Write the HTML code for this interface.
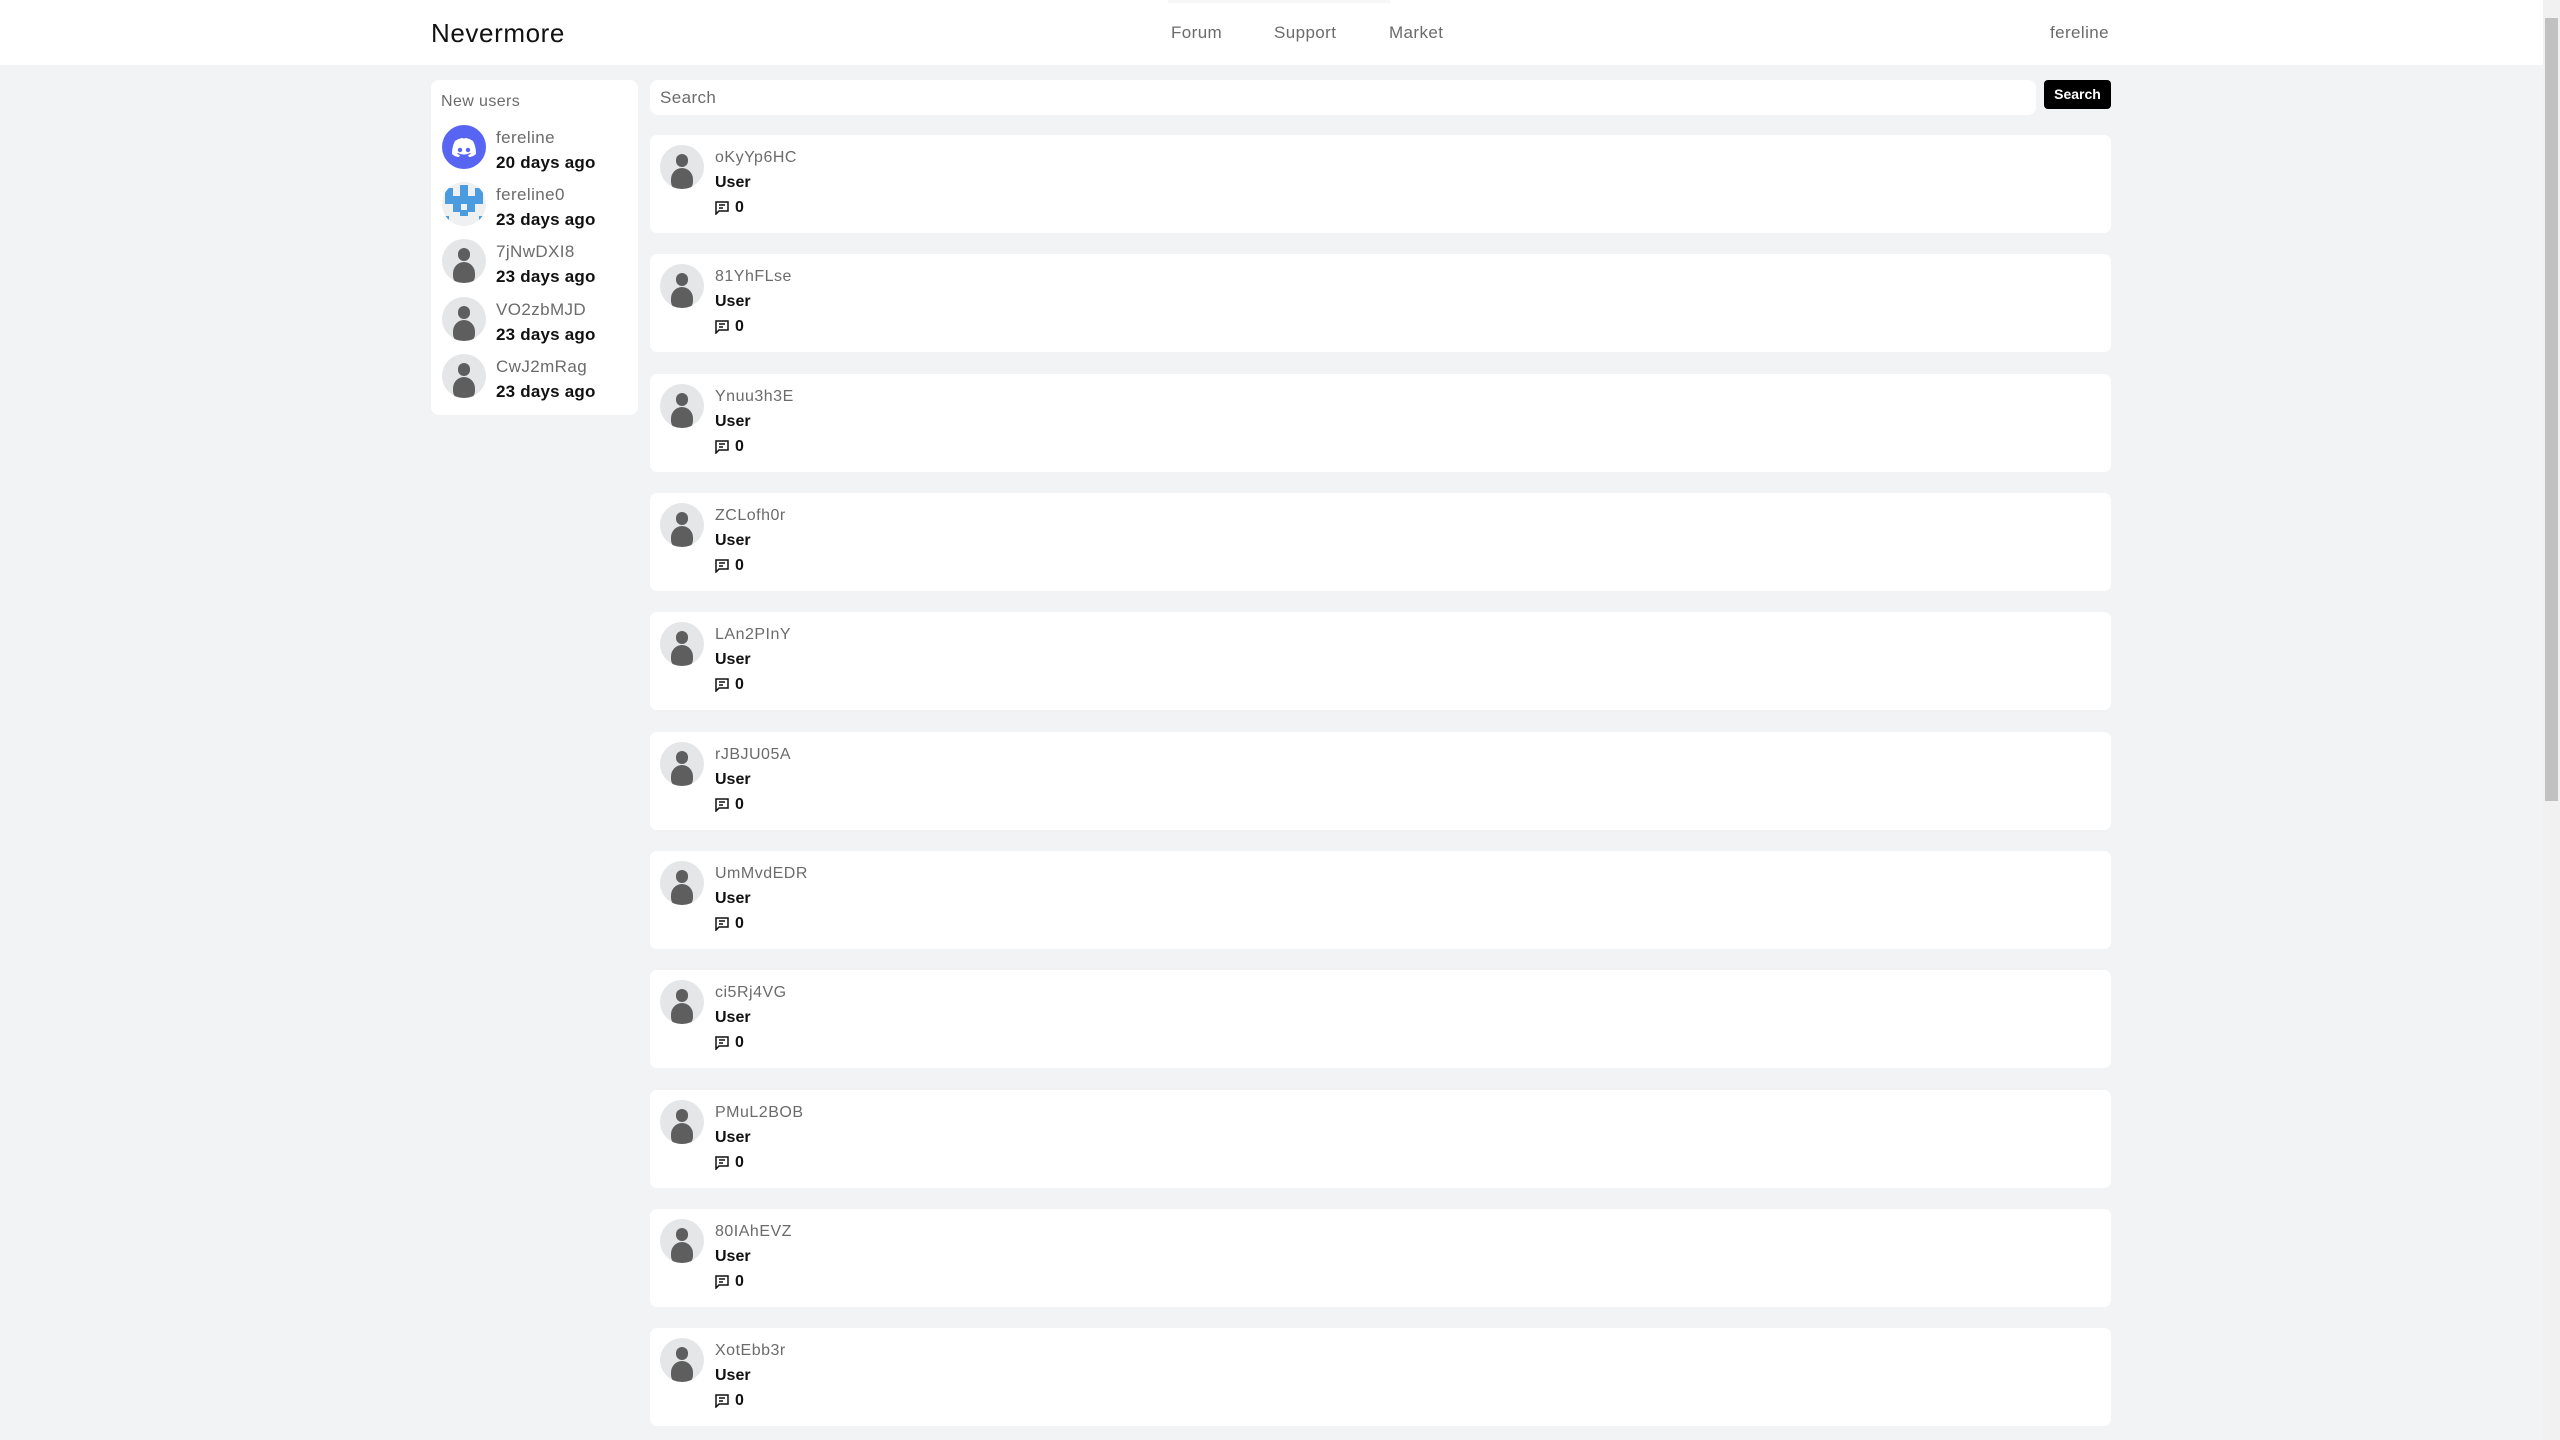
<!DOCTYPE html>
<html><head><meta charset="utf-8"><style>
*{margin:0;padding:0;box-sizing:border-box}
body{width:2560px;height:1440px;overflow:hidden;background:#f2f3f5;font-family:"Liberation Sans",sans-serif;position:relative}
.hdr{position:absolute;left:0;top:0;width:2543px;height:65px;background:#fff}
.a{position:absolute;white-space:nowrap}
.logo{left:431px;top:18px;font-size:26px;color:#111;font-weight:500;letter-spacing:0.6px}
.nav{top:23px;font-size:17px;color:#6b6b6b;letter-spacing:0.4px}
.side{left:431px;top:80px;width:207px;height:335px;background:#fff;border-radius:8px}
.av{position:absolute;border-radius:50%;background:#e5e6e8;overflow:hidden}
.av .h{position:absolute;left:36%;top:21%;width:28%;height:28%;border-radius:50%;background:#5e5e5e}
.av .b{position:absolute;left:25%;top:53%;width:50%;height:52%;border-radius:50% 50% 40% 40%;background:#5e5e5e}
.nm{font-size:17px;color:#6b6b6b;letter-spacing:0.4px}
.tm{font-size:17px;color:#111;font-weight:bold;letter-spacing:0.2px}
.search{left:650px;top:80px;width:1386px;height:35px;background:#fff;border-radius:8px}
.btn{left:2044px;top:80px;width:67px;height:29px;background:#000;border-radius:4px;color:#fff;font-size:14px;font-weight:bold;text-align:center;line-height:29px}
.card{position:absolute;left:650px;width:1461px;height:98px;background:#fff;border-radius:7px}
.card .av{left:10px;top:10px;width:44px;height:44px}
.card .n{position:absolute;left:65px;top:14px;font-size:16px;color:#6b6b6b;letter-spacing:0.5px}
.card .u{position:absolute;left:65px;top:39px;font-size:16px;color:#111;font-weight:bold}
.card .c{position:absolute;left:65px;top:64px;font-size:16px;color:#111;font-weight:bold}
.card .c svg{vertical-align:-3px;margin-right:6px}
.sb{position:absolute;left:2543px;top:0;width:17px;height:1440px;background:#f1f1f1}
.th{position:absolute;left:2545px;top:18px;width:13px;height:783px;background:#c1c1c1}
</style></head><body>
<div class="hdr"></div>
<div class="a" style="left:1168px;top:0;width:222px;height:3px;background:#f7f7f7"></div>
<div class="a logo">Nevermore</div>
<div class="a nav" style="left:1171px">Forum</div>
<div class="a nav" style="left:1274px">Support</div>
<div class="a nav" style="left:1389px">Market</div>
<div class="a nav" style="left:2050px">fereline</div>

<div class="a side"></div>
<div class="a" style="left:441px;top:93px;font-size:16px;color:#6b6b6b;letter-spacing:0.4px">New users</div>

<div class="av" style="left:442px;top:125px;width:44px;height:44px;background:#5865f2">
<svg width="44" height="44" viewBox="0 0 44 44"><path d="M13 16c3-2 6-3 8-3l1 1 1-1c2 0 5 1 8 3 2 4 3 8 3 13-2 2-5 3-7 3l-1-2c1 0 2-1 3-1l-1-1c-4 2-8 2-12 0l-1 1c1 0 2 1 3 1l-1 2c-2 0-5-1-7-3 0-5 1-9 3-13z" fill="#fff"/><circle cx="18" cy="25" r="2.2" fill="#5865f2"/><circle cx="26" cy="25" r="2.2" fill="#5865f2"/></svg></div>
<div class="a nm" style="left:496px;top:128px">fereline</div>
<div class="a tm" style="left:496px;top:153px">20 days ago</div>

<div class="av" style="left:442px;top:182px;width:44px;height:44px;background:#eef0f2">
<svg width="44" height="44" viewBox="0 0 44 44" fill="#4a9be0"><rect x="3" y="6" width="8" height="8"/><rect x="18" y="3" width="8" height="11"/><rect x="33" y="6" width="8" height="8"/><rect x="3" y="14" width="38" height="8"/><rect x="11" y="22" width="8" height="8"/><rect x="25" y="22" width="8" height="8"/><rect x="18" y="28" width="8" height="6"/><rect x="3" y="34" width="4" height="6"/><rect x="37" y="34" width="4" height="6"/></svg></div>
<div class="a nm" style="left:496px;top:185px">fereline0</div>
<div class="a tm" style="left:496px;top:210px">23 days ago</div>

<div class="av" style="left:442px;top:239px;width:44px;height:44px"><div class="h"></div><div class="b"></div></div>
<div class="a nm" style="left:496px;top:242px">7jNwDXI8</div>
<div class="a tm" style="left:496px;top:267px">23 days ago</div>

<div class="av" style="left:442px;top:297px;width:44px;height:44px"><div class="h"></div><div class="b"></div></div>
<div class="a nm" style="left:496px;top:300px">VO2zbMJD</div>
<div class="a tm" style="left:496px;top:325px">23 days ago</div>

<div class="av" style="left:442px;top:354px;width:44px;height:44px"><div class="h"></div><div class="b"></div></div>
<div class="a nm" style="left:496px;top:357px">CwJ2mRag</div>
<div class="a tm" style="left:496px;top:382px">23 days ago</div>

<div class="a search"></div>
<div class="a" style="left:660px;top:88px;font-size:17px;color:#6b6b6b;letter-spacing:0.4px">Search</div>
<div class="a btn">Search</div>

<div class="card" style="top:135px"><div class="av"><div class="h"></div><div class="b"></div></div><div class="n">oKyYp6HC</div><div class="u">User</div><div class="c"><svg width="14" height="14" viewBox="0 0 14 14" fill="none" stroke="#111" stroke-width="1.5"><path d="M1 1h12v9H4l-3 3z"/><path d="M4 4h6M4 7h4"/></svg>0</div></div>
<div class="card" style="top:254px"><div class="av"><div class="h"></div><div class="b"></div></div><div class="n">81YhFLse</div><div class="u">User</div><div class="c"><svg width="14" height="14" viewBox="0 0 14 14" fill="none" stroke="#111" stroke-width="1.5"><path d="M1 1h12v9H4l-3 3z"/><path d="M4 4h6M4 7h4"/></svg>0</div></div>
<div class="card" style="top:374px"><div class="av"><div class="h"></div><div class="b"></div></div><div class="n">Ynuu3h3E</div><div class="u">User</div><div class="c"><svg width="14" height="14" viewBox="0 0 14 14" fill="none" stroke="#111" stroke-width="1.5"><path d="M1 1h12v9H4l-3 3z"/><path d="M4 4h6M4 7h4"/></svg>0</div></div>
<div class="card" style="top:493px"><div class="av"><div class="h"></div><div class="b"></div></div><div class="n">ZCLofh0r</div><div class="u">User</div><div class="c"><svg width="14" height="14" viewBox="0 0 14 14" fill="none" stroke="#111" stroke-width="1.5"><path d="M1 1h12v9H4l-3 3z"/><path d="M4 4h6M4 7h4"/></svg>0</div></div>
<div class="card" style="top:612px"><div class="av"><div class="h"></div><div class="b"></div></div><div class="n">LAn2PInY</div><div class="u">User</div><div class="c"><svg width="14" height="14" viewBox="0 0 14 14" fill="none" stroke="#111" stroke-width="1.5"><path d="M1 1h12v9H4l-3 3z"/><path d="M4 4h6M4 7h4"/></svg>0</div></div>
<div class="card" style="top:732px"><div class="av"><div class="h"></div><div class="b"></div></div><div class="n">rJBJU05A</div><div class="u">User</div><div class="c"><svg width="14" height="14" viewBox="0 0 14 14" fill="none" stroke="#111" stroke-width="1.5"><path d="M1 1h12v9H4l-3 3z"/><path d="M4 4h6M4 7h4"/></svg>0</div></div>
<div class="card" style="top:851px"><div class="av"><div class="h"></div><div class="b"></div></div><div class="n">UmMvdEDR</div><div class="u">User</div><div class="c"><svg width="14" height="14" viewBox="0 0 14 14" fill="none" stroke="#111" stroke-width="1.5"><path d="M1 1h12v9H4l-3 3z"/><path d="M4 4h6M4 7h4"/></svg>0</div></div>
<div class="card" style="top:970px"><div class="av"><div class="h"></div><div class="b"></div></div><div class="n">ci5Rj4VG</div><div class="u">User</div><div class="c"><svg width="14" height="14" viewBox="0 0 14 14" fill="none" stroke="#111" stroke-width="1.5"><path d="M1 1h12v9H4l-3 3z"/><path d="M4 4h6M4 7h4"/></svg>0</div></div>
<div class="card" style="top:1090px"><div class="av"><div class="h"></div><div class="b"></div></div><div class="n">PMuL2BOB</div><div class="u">User</div><div class="c"><svg width="14" height="14" viewBox="0 0 14 14" fill="none" stroke="#111" stroke-width="1.5"><path d="M1 1h12v9H4l-3 3z"/><path d="M4 4h6M4 7h4"/></svg>0</div></div>
<div class="card" style="top:1209px"><div class="av"><div class="h"></div><div class="b"></div></div><div class="n">80IAhEVZ</div><div class="u">User</div><div class="c"><svg width="14" height="14" viewBox="0 0 14 14" fill="none" stroke="#111" stroke-width="1.5"><path d="M1 1h12v9H4l-3 3z"/><path d="M4 4h6M4 7h4"/></svg>0</div></div>
<div class="card" style="top:1328px"><div class="av"><div class="h"></div><div class="b"></div></div><div class="n">XotEbb3r</div><div class="u">User</div><div class="c"><svg width="14" height="14" viewBox="0 0 14 14" fill="none" stroke="#111" stroke-width="1.5"><path d="M1 1h12v9H4l-3 3z"/><path d="M4 4h6M4 7h4"/></svg>0</div></div>

<div class="sb"></div><div class="th"></div>
</body></html>
